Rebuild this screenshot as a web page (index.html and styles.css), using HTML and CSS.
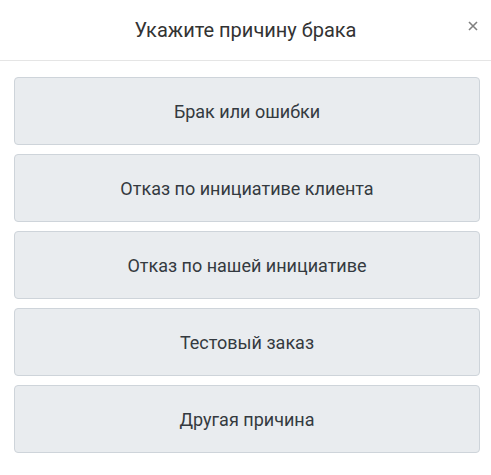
FILE: index.html
```html
<!DOCTYPE html>
<html lang="ru">
<head>
    <meta charset="UTF-8">
    <meta name="viewport" content="width=device-width, initial-scale=1.0">
    <title>Причина брака</title>
    <link rel="stylesheet" href="styles.css">
</head>
<body>

    <div class="modal">
        <div class="modal-header">
            <h5 class="modal-title">Укажите причину брака</h5>
            <button type="button" class="close" aria-label="Закрыть">
                <svg width="10" height="10" viewBox="0 0 10 10">
                    <path d="M1 1 L9 9 M9 1 L1 9" stroke="#808080" stroke-width="1.6" fill="none"/>
                </svg>
            </button>
        </div>
        <div class="modal-body">
            <button type="button" class="btn-reason">Брак или ошибки</button>
            <button type="button" class="btn-reason">Отказ по инициативе клиента</button>
            <button type="button" class="btn-reason">Отказ по нашей инициативе</button>
            <button type="button" class="btn-reason">Тестовый заказ</button>
            <button type="button" class="btn-reason">Другая причина</button>
        </div>
    </div>

</body>
</html>
```

FILE: styles.css
```css
body {
    margin: 0;
    font-family: Roboto, 'Noto Sans', sans-serif;
    background-color: #fff;
    color: #333;
}

.modal {
    width: 100%;
}

.modal-header {
    position: relative;
    height: 60px;
    border-bottom: 1px solid #e5e5e5;
    display: flex;
    justify-content: center;
    align-items: center;
}

.modal-title {
    margin: 0;
    font-size: 20px;
    font-weight: 400;
    color: #333;
}

.close {
    position: absolute;
    right: 13px;
    top: 21px;
    background: none;
    border: none;
    padding: 0;
    line-height: 0;
    cursor: pointer;
}

.modal-body {
    padding: 16px 11px 16px 14px;
    display: flex;
    flex-direction: column;
    gap: 9px;
}

.btn-reason {
    height: 68px;
    background-color: #e9ecef;
    border: 1px solid #ced4da;
    border-radius: 4px;
    font-family: inherit;
    font-size: 18px;
    font-weight: 400;
    color: #343a40;
    cursor: pointer;
}

.btn-reason:hover {
    background-color: #dde1e5;
}
```
